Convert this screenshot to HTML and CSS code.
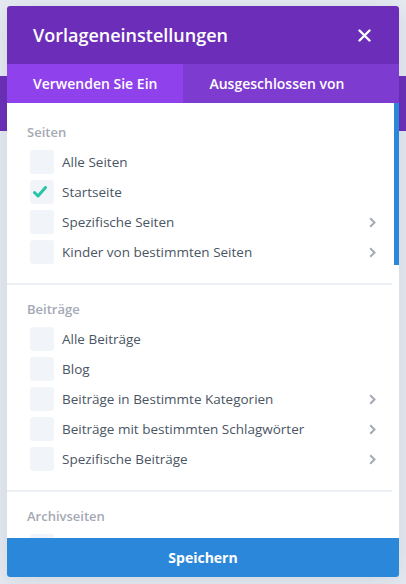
FILE: index.html
```html
<!DOCTYPE html>
<html lang="de">
<head>
    <meta charset="UTF-8">
    <meta name="viewport" content="width=device-width, initial-scale=1.0">
    <title>Vorlageneinstellungen</title>
    <link rel="stylesheet" href="styles.css">
</head>
<body>

    <div class="modal">
        <div class="modalHeader">
            <h2>Vorlageneinstellungen</h2>
            <svg class="closeIcon" width="13" height="13" viewBox="0 0 13 13">
                <path d="M1.5 1.5 L11.5 11.5 M11.5 1.5 L1.5 11.5" stroke="#fff" stroke-width="2.4" stroke-linecap="round"/>
            </svg>
        </div>

        <div class="tabs">
            <div class="tab active">Verwenden Sie Ein</div>
            <div class="tab">Ausgeschlossen von</div>
        </div>

        <div class="modalBody">
            <div class="scrollThumb"></div>

            <div class="section first">
                <div class="sectionTitle">Seiten</div>
                <div class="option"><span class="box"></span><span class="label">Alle Seiten</span></div>
                <div class="option"><span class="box checked"><svg width="14" height="12" viewBox="0 0 14 12"><path d="M1.5 6.5 L5 10 L12.5 1.5" fill="none" stroke="#29c4a9" stroke-width="3" stroke-linecap="round" stroke-linejoin="round"/></svg></span><span class="label">Startseite</span></div>
                <div class="option"><span class="box"></span><span class="label">Spezifische Seiten</span><svg class="chevron" width="7" height="11" viewBox="0 0 7 11"><path d="M1.2 1.2 L5.5 5.5 L1.2 9.8" fill="none" stroke="#a3a9b5" stroke-width="2"/></svg></div>
                <div class="option"><span class="box"></span><span class="label">Kinder von bestimmten Seiten</span><svg class="chevron" width="7" height="11" viewBox="0 0 7 11"><path d="M1.2 1.2 L5.5 5.5 L1.2 9.8" fill="none" stroke="#a3a9b5" stroke-width="2"/></svg></div>
            </div>

            <div class="section">
                <div class="sectionTitle">Beiträge</div>
                <div class="option"><span class="box"></span><span class="label">Alle Beiträge</span></div>
                <div class="option"><span class="box"></span><span class="label">Blog</span></div>
                <div class="option"><span class="box"></span><span class="label">Beiträge in Bestimmte Kategorien</span><svg class="chevron" width="7" height="11" viewBox="0 0 7 11"><path d="M1.2 1.2 L5.5 5.5 L1.2 9.8" fill="none" stroke="#a3a9b5" stroke-width="2"/></svg></div>
                <div class="option"><span class="box"></span><span class="label">Beiträge mit bestimmten Schlagwörter</span><svg class="chevron" width="7" height="11" viewBox="0 0 7 11"><path d="M1.2 1.2 L5.5 5.5 L1.2 9.8" fill="none" stroke="#a3a9b5" stroke-width="2"/></svg></div>
                <div class="option"><span class="box"></span><span class="label">Spezifische Beiträge</span><svg class="chevron" width="7" height="11" viewBox="0 0 7 11"><path d="M1.2 1.2 L5.5 5.5 L1.2 9.8" fill="none" stroke="#a3a9b5" stroke-width="2"/></svg></div>
            </div>

            <div class="section">
                <div class="sectionTitle">Archivseiten</div>
                <div class="option"><span class="box"></span></div>
            </div>
        </div>

        <button class="saveBtn" type="button">Speichern</button>
    </div>

</body>
</html>
```

FILE: styles.css
```css
body {
    margin: 0;
    height: 584px;
    overflow: hidden;
    font-family: "Open Sans", "Liberation Sans", sans-serif;
    /* page behind the modal: grey with a purple bar */
    background: linear-gradient(to bottom, #e6ebf2 76px, #6c2eb9 76px, #6c2eb9 131px, #e6ebf2 131px);
}

.modal {
    display: flex;
    flex-direction: column;
    width: 392px;
    height: 571px;
    margin: 6px 0 0 7px;
    border-radius: 3px;
    overflow: hidden;
    background: #fff;
    box-shadow: 0 4px 24px rgba(43, 58, 80, 0.12);
}

.modalHeader {
    display: flex;
    align-items: center;
    justify-content: space-between;
    height: 58px;
    padding: 0 28px 0 26px;
    background-color: #6c2eb9;
    flex-shrink: 0;
}

.modalHeader h2 {
    margin: 0;
    color: #fff;
    font-size: 18px;
    font-weight: 600;
}

.closeIcon {
    display: block;
}

.tabs {
    display: flex;
    height: 39px;
    background-color: #7e3bd0;
    flex-shrink: 0;
}

.tab {
    display: flex;
    align-items: center;
    padding: 0 26px;
    color: #fff;
    font-size: 14px;
    font-weight: 600;
}

.tab.active {
    background-color: #8f42ec;
}

.modalBody {
    position: relative;
    flex: 1;
    overflow: hidden;
    padding-top: 4px;
}

/* blue scrollbar thumb on the right edge */
.scrollThumb {
    position: absolute;
    top: 0;
    right: 0;
    width: 5px;
    height: 162px;
    background-color: #2b87da;
}

.section {
    padding: 14px 0 19px 0;
    margin-right: 7px;
    border-bottom: 2px solid #eceff4;
}

.section.first {
    padding-top: 15px;
}

.sectionTitle {
    padding-left: 20px;
    margin-bottom: 8px;
    line-height: 20px;
    color: #a3a9b5;
    font-size: 13px;
    font-weight: 600;
}

.option {
    display: flex;
    align-items: center;
    height: 24px;
    padding: 0 16px 0 23px;
    margin-bottom: 6px;
}

.option:last-child {
    margin-bottom: 0;
}

.box {
    display: flex;
    align-items: center;
    width: 24px;
    height: 24px;
    border-radius: 3px;
    background-color: #f1f5f9;
    flex-shrink: 0;
}

.box.checked svg {
    margin-left: 3px;
}

.label {
    flex: 1;
    margin-left: 8px;
    color: #4a5563;
    font-size: 13.5px;
}

.chevron {
    display: block;
}

.saveBtn {
    height: 39px;
    flex-shrink: 0;
    border: none;
    background-color: #2b87da;
    color: #fff;
    font-family: "Open Sans", "Liberation Sans", sans-serif;
    font-size: 14px;
    font-weight: 700;
    cursor: pointer;
}
```
